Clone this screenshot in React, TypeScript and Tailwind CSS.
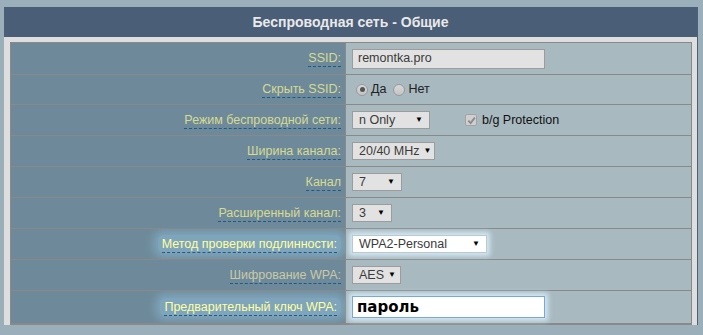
import type { ReactNode } from 'react';

const font = { fontFamily: '"Liberation Sans", Arial, sans-serif' };

function Label({ text, glow, dim }: { text: string; glow?: boolean; dim?: boolean }) {
  const color = glow ? 'text-[#ffff9c]' : dim ? 'text-[#c9c9a6]' : 'text-[#d6da93]';
  return (
    <span
      className={
        glow
          ? 'rounded-md bg-[#7fa5bc] px-1 shadow-[0_0_9px_5px_rgba(128,167,190,0.85)]'
          : ''
      }
    >
      <span className={`border-b border-dashed border-[#1d5a86] pb-px leading-[15px] ${color}`}>{text}</span>
    </span>
  );
}

function Select({ value, width, white, glow }: { value: string; width: string; white?: boolean; glow?: boolean }) {
  return (
    <div
      className={`flex h-[18px] items-center justify-between whitespace-nowrap border pl-[6px] pr-[6px] text-[12.5px] text-[#3a3a3a] ${width} ${
        white ? 'border-[#bcc8cc] bg-white' : 'border-[#9c9c9c] bg-[#e2e2e2]'
      } ${glow ? 'shadow-[0_0_5px_3px_rgba(215,238,250,0.9)]' : ''}`}
    >
      <span>{value}</span>
      <span className="ml-[4px] text-[8px] text-black">▼</span>
    </div>
  );
}

function Radio({ checked }: { checked?: boolean }) {
  return (
    <span className="flex h-[12px] w-[12px] items-center justify-center rounded-full border border-[#9a9a9a] bg-gradient-to-b from-[#d8d8d8] to-[#c4c4c4]">
      {checked && <span className="h-[5px] w-[5px] rounded-full bg-[#555]" />}
    </span>
  );
}

function Row({ label, children, h = 'h-[31px]', glow, dim }: { label: string; children: ReactNode; h?: string; glow?: boolean; dim?: boolean }) {
  return (
    <div className={`flex border-b border-[#898989] ${h}`}>
      <div className="flex w-[335px] shrink-0 items-center justify-end overflow-hidden border-r border-[#898989] bg-[#6e8a9a] pr-[4px] text-[12.5px]">
        <Label text={label} glow={glow} dim={dim} />
      </div>
      <div className="flex flex-1 items-center bg-[#a8b9c0] pl-[6px]">{children}</div>
    </div>
  );
}

export default function App() {
  return (
    <div className="h-[335px] w-[703px] overflow-hidden bg-[#9aafb9] pt-[7px] pl-[4px]" style={font}>
      <div className="w-[694px] border-r border-[#4c6178]">
        <div className="flex h-[30px] items-center justify-center bg-[#4b5e78] text-[14px] font-bold text-[#e9e9e9]">
          Беспроводная сеть - Общие
        </div>
        <div className="bg-[#dedede] pt-[5px] pl-[6px] pr-[5px]">
          <div className="border border-[#898989]">
            <Row label="SSID:" h="h-[32px]">
              <div className="flex h-[20px] w-[193px] items-center border border-[#9c9c9c] bg-[#e2e2e2] pl-[5px] text-[12.5px] text-[#3a3a3a]">
                remontka.pro
              </div>
            </Row>
            <Row label="Скрыть SSID:" h="h-[30px]">
              <div className="flex items-center text-[12.5px] text-[#222]">
                <span className="ml-[4px]"><Radio checked /></span>
                <span className="ml-[3px]">Да</span>
                <span className="ml-[7px]"><Radio /></span>
                <span className="ml-[3px]">Нет</span>
              </div>
            </Row>
            <Row label="Режим беспроводной сети:">
              <Select value="n Only" width="w-[78px]" />
              <span className="ml-[35px] flex h-[12px] w-[12px] items-center justify-center rounded-[2px] border border-[#a3a3a3] bg-[#cfcfcf]">
                <svg width="9" height="9" viewBox="0 0 10 10">
                  <path d="M1.5 5.2 L4 7.8 L8.7 1.8" fill="none" stroke="#8a8a8a" strokeWidth="2" />
                </svg>
              </span>
              <span className="ml-[5px] text-[12.5px] text-[#111]">b/g Protection</span>
            </Row>
            <Row label="Ширина канала:">
              <Select value="20/40 MHz" width="w-[83px]" />
            </Row>
            <Row label="Канал">
              <Select value="7" width="w-[50px]" />
            </Row>
            <Row label="Расширенный канал:">
              <Select value="3" width="w-[40px]" />
            </Row>
            <Row label="Метод проверки подлинности:" glow>
              <Select value="WPA2-Personal" width="w-[135px]" white glow />
            </Row>
            <Row label="Шифрование WPA:" dim>
              <Select value="AES" width="w-[49px]" />
            </Row>
            <Row label="Предварительный ключ WPA:" h="h-[33px]" glow>
              <div
                className="flex h-[22px] w-[193px] items-center border border-[#79a6dc] bg-white pl-[4px] text-[15px] font-bold text-black shadow-[0_0_5px_3px_rgba(215,238,250,0.9)]"
                style={{ fontFamily: '"DejaVu Sans", Verdana, sans-serif' }}
              >
                пароль
              </div>
            </Row>
          </div>
        </div>
      </div>
    </div>
  );
}
